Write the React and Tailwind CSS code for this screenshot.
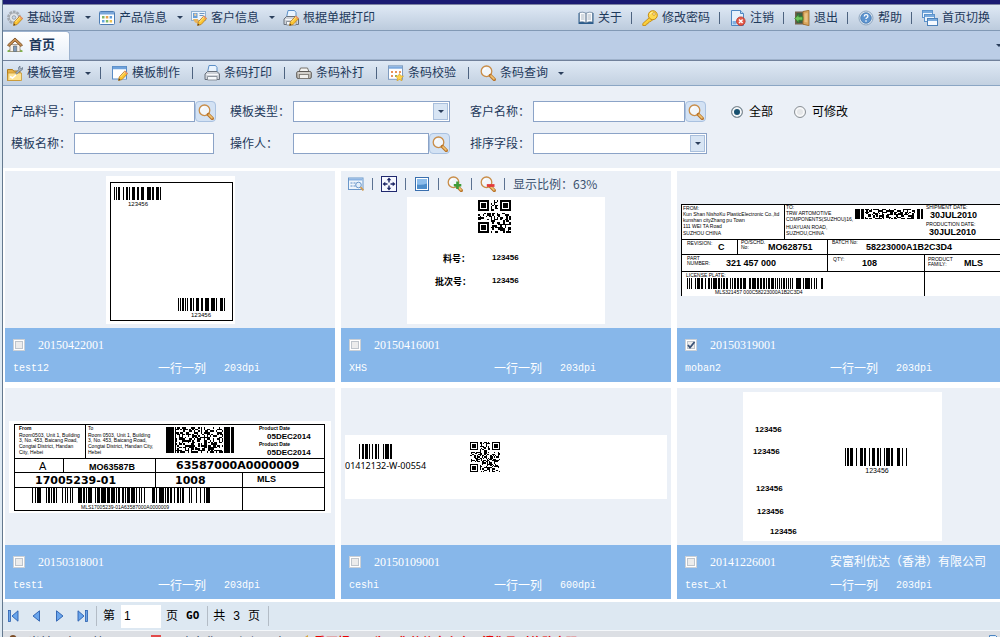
import React, { useState } from 'react';

const TINY = 'Liberation Sans, sans-serif';
const WIDE = 'DejaVu Sans, sans-serif';
const CJK = 'Noto Sans CJK SC, sans-serif';

/* ---------- icons ---------- */

const Icon = ({ children, className = 'w-4 h-4' }) => (
  <svg viewBox="0 0 16 16" className={`${className} shrink-0`} aria-hidden="true">{children}</svg>
);

const Pencil = () => (
  <g>
    <path d="M6.500 15.500l.8-3.600 5.600-6 2.800 2.600-5.600 6z" fill="#fbc531" stroke="#b9791a" strokeWidth=".8" />
    <path d="M12 6.800l2.700 2.600 1-1.100-2.700-2.500z" fill="#e9926f" />
    <path d="M8.500 12l4.500-4.900" stroke="#fff0a8" strokeWidth=".8" />
    <path d="M6.500 15.500l.5-2 1.500 1.400z" fill="#4d3b22" />
  </g>
);

const GearIcon = () => (
  <Icon>
    <circle cx="7" cy="7.500" r="5.600" fill="none" stroke="#a3a9b0" strokeWidth="2.600" strokeDasharray="2.600 .918" />
    <circle cx="7" cy="7.500" r="4.600" fill="#e2e5e8" stroke="#a3a9b0" strokeWidth="1" />
    <circle cx="7" cy="7.500" r="1.800" fill="#c8d8ea" stroke="#8f969e" strokeWidth=".8" />
    <Pencil />
  </Icon>
);

const GridIcon = () => (
  <Icon>
    <rect x=".5" y="1.500" width="15" height="13" rx="1" fill="#fff" stroke="#4c7cb4" />
    <rect x="1" y="2" width="14" height="2.500" fill="#7ba7da" />
    <rect x="3" y="6" width="2.500" height="2.500" fill="#82b56a" />
    <rect x="6.800" y="6" width="2.500" height="2.500" fill="#e7a24b" />
    <rect x="10.600" y="6" width="2.500" height="2.500" fill="#5f9bd8" />
    <rect x="3" y="10" width="2.500" height="2.500" fill="#63a5df" />
    <rect x="6.800" y="10" width="2.500" height="2.500" fill="#7cb868" />
    <rect x="10.600" y="10" width="2.500" height="2.500" fill="#eec04f" />
  </Icon>
);

const CustomerIcon = () => (
  <Icon>
    <rect x=".5" y="1.500" width="14" height="9" fill="#eef5fc" stroke="#8fb0d2" />
    <rect x="2" y="3" width="4.500" height="5" fill="#69a0d8" />
    <circle cx="4.300" cy="4.700" r="1.200" fill="#f3cc9b" />
    <path d="M8.500 3.500h5M8.500 5.500h4" stroke="#6f97c2" />
    <path d="M2 9h5l1 5-4-1.500z" fill="#e8b45d" />
    <Pencil />
  </Icon>
);

const Printer = () => (
  <g>
    <path d="M3.500 7.500l1.500-7h6.500l1.500 2v5z" fill="#eaf4fe" stroke="#5b8fc7" />
    <path d="M1 9l2.500-2.500h9.500L15.500 9v5.500H1z" fill="#cfd3d9" stroke="#69717c" />
    <path d="M3.500 11.500h9.500v3.500H3.500z" fill="#f6f9fc" stroke="#7a828c" strokeWidth=".8" />
    <path d="M2.500 9.500h11.500" stroke="#f7f8fa" />
  </g>
);

const PrintIcon = () => <Icon><Printer /></Icon>;
const PrintEditIcon = () => <Icon><Printer /><Pencil /></Icon>;

const ReprintIcon = () => (
  <Icon>
    <path d="M3 7l1.500-4h7L13 7z" fill="#f4f4f2" stroke="#77736d" />
    <rect x=".7" y="6.500" width="14.600" height="7" rx="1.500" fill="#bdb9b2" stroke="#5e5b57" />
    <path d="M1.500 8h13" stroke="#e8e6e2" />
    <rect x="3.500" y="9.500" width="9" height="4" fill="#f0efec" stroke="#77736d" strokeWidth=".8" />
  </Icon>
);

const BookIcon = () => (
  <Icon>
    <path d="M.5 3h15v11H.5z" fill="#2b5c8c" />
    <path d="M1.500 2.500q3.500-1 6.500.7v9.500q-3-1.500-6.500-.7zM14.500 2.500q-3.500-1-6.500.7v9.500q3-1.500 6.500-.7z" fill="#fbfcfd" stroke="#5c7794" strokeWidth=".7" />
    <path d="M3 5h3.500M3 7h3.500M3 9h3.500M9.500 5H13M9.500 7H13M9.500 9H13" stroke="#9aa7b5" strokeWidth=".8" />
  </Icon>
);

const KeyIcon = () => (
  <Icon>
    <path d="M7.500 7.500L.8 13.500v2h3l.6-1.500 1.600-.3.500-1.500 1.500-.4L10.500 10z" fill="#fbd03c" stroke="#c68b12" strokeWidth=".9" />
    <circle cx="10.800" cy="5.200" r="4.500" fill="#fdd94f" stroke="#c68b12" />
    <circle cx="12" cy="4" r="1.300" fill="#fff8dd" stroke="#c68b12" strokeWidth=".7" />
    <path d="M8 4.500q1-2.300 2.500-2.300" stroke="#fff3b0" fill="none" />
  </Icon>
);

const LogoutIcon = () => (
  <Icon>
    <path d="M1.500.5h9l3 3v12h-12z" fill="#e6f1fc" stroke="#4e86c2" />
    <path d="M10.500.5v3h3" fill="#bcd7f1" stroke="#4e86c2" />
    <path d="M2.500 14.500V11h4v3.500z" fill="#7fb0e2" />
    <circle cx="10.800" cy="11.200" r="4.300" fill="#e55a49" stroke="#b23428" strokeWidth=".8" />
    <path d="M9 9.400l3.600 3.600M12.600 9.400L9 13" stroke="#fff" strokeWidth="1.400" />
  </Icon>
);

const ExitIcon = () => (
  <Icon>
    <path d="M1 1.500h14v13H1z" fill="#74624b" />
    <path d="M2.500 3h6v10h-6z" fill="#3c5f45" />
    <path d="M9 1.500l6-1.200v15.400l-6-1.500z" fill="#d9a55b" stroke="#94672b" strokeWidth=".8" />
    <path d="M10.500 3.500l3-.5v9.500l-3-.5z" fill="#e9c184" />
    <path d="M.8 8.500l4-4v2.300h4v3.400h-4v2.300z" fill="#6fc65c" stroke="#2f7d2b" strokeWidth=".8" />
  </Icon>
);

const HelpIcon = () => (
  <Icon>
    <circle cx="8" cy="8" r="7" fill="#dfe8f2" stroke="#8ea6c0" />
    <circle cx="8" cy="8" r="5.300" fill="#5c93cf" stroke="#3f73ab" strokeWidth=".7" />
    <path d="M6.200 6.500q.1-1.800 1.900-1.800t1.800 1.500q0 .9-1 1.500-.9.500-.9 1.400M8 10.300v1.400" fill="none" stroke="#fff" strokeWidth="1.300" />
  </Icon>
);

const WindowsIcon = () => (
  <Icon>
    <rect x=".5" y=".5" width="10" height="7" fill="#edf5fd" stroke="#5d93cb" />
    <path d="M1 2h9" stroke="#78aadd" strokeWidth="2" />
    <rect x="2.500" y="4.500" width="10" height="7" fill="#edf5fd" stroke="#5d93cb" />
    <path d="M3 6h9" stroke="#78aadd" strokeWidth="2" />
    <rect x="5.500" y="8.500" width="10" height="7" fill="#f6faff" stroke="#4d82ba" />
    <path d="M6 10h9" stroke="#78aadd" strokeWidth="2" />
  </Icon>
);

const HomeIcon = () => (
  <Icon>
    <path d="M.5 13.500q3-2 7.500-2t7.500 2v1.500H.5z" fill="#7fb14a" />
    <path d="M3 7.500h10v7H3z" fill="#f7f1e8" stroke="#9a8b7a" strokeWidth=".8" />
    <path d="M6.500 9h3.200v5.500H6.500z" fill="#7f9bbb" stroke="#5f6b78" strokeWidth=".7" />
    <path d="M.5 8L8 1l7.500 7-1.500 1.500L8 4 2 9.500z" fill="#c99152" stroke="#7c4e22" strokeWidth=".9" />
  </Icon>
);

const FolderToolIcon = () => (
  <Icon>
    <path d="M.5 4.500h5l1.200 1.500H13v9.500H.5z" fill="#e5b047" stroke="#b07c1d" />
    <path d="M1 8h13.500v7.500H.8z" fill="#fde394" stroke="#c79632" strokeWidth=".8" />
    <path d="M3 11.500l2.500 1.500L9 10" fill="none" stroke="#fff" strokeWidth="1.600" />
    <path d="M8.500 8l3.200-3.200Q10.800 2.200 13 1l-.2 1.800 1.400.8L15.700 2.500Q16 5.500 13 6L9.800 9z" fill="#a9b6c6" stroke="#5f7085" strokeWidth=".7" />
  </Icon>
);

const DesignIcon = () => (
  <Icon>
    <rect x=".5" y="1.500" width="14" height="12.500" fill="#fff" stroke="#5a8cc5" />
    <path d="M1 3h13" stroke="#6fa2dc" strokeWidth="2.500" />
    <path d="M14 8v6H8z" fill="#dcebfa" />
    <Pencil />
  </Icon>
);

const VerifyIcon = () => (
  <Icon>
    <rect x=".5" y=".8" width="14" height="13.500" fill="#fff" stroke="#7f9cc0" />
    <path d="M1 2.500h13" stroke="#7fabdf" strokeWidth="2.500" />
    <path d="M3 6h2v2H3zM7 6h2v2H7z" fill="#e8935a" />
    <path d="M11 6h2v2h-2zM3 10h2v2H3z" fill="#e8935a" />
    <path d="M7 10h2v2H7z" fill="#7eb56a" />
    <path d="M11.500 8.500l1.200 2.300 2.800.4-2 1.900.5 2.700-2.500-1.300L9 15.800l.5-2.700-2-1.900 2.800-.4z" fill="#ffd34a" stroke="#d09b1e" strokeWidth=".6" />
  </Icon>
);

const Lens = () => (
  <g>
    <circle cx="6.500" cy="6.300" r="5.300" fill="#f2f6fa" stroke="#c98d48" strokeWidth="1.300" />
    <path d="M3.500 5.500q.6-2 2.700-2.300" fill="none" stroke="#fff" strokeWidth="1.200" />
    <path d="M10.300 10.500l4 4" stroke="#b97429" strokeWidth="3.200" strokeLinecap="round" />
    <path d="M11 10.900l3 3" stroke="#f0c372" strokeWidth="1.500" strokeLinecap="round" />
  </g>
);

const SearchIcon = () => <Icon><Lens /></Icon>;
const ZoomInIcon = () => <Icon><Lens /><path d="M10.500 5.500v7.500M6.800 9.200h7.500" stroke="#3f9c39" strokeWidth="2.600" /></Icon>;
const ZoomOutIcon = () => <Icon><Lens /><path d="M6.800 9.500h7.700" stroke="#e23c3c" strokeWidth="2.800" /></Icon>;

const PreviewIcon = () => (
  <Icon>
    <rect x=".5" y="2" width="14.500" height="11.500" fill="#eef5fc" stroke="#6a97ca" />
    <path d="M1 3.500h13.500" stroke="#8db4e2" strokeWidth="2" />
    <path d="M2.500 7h2M2.500 10h2M5.500 7h2M5.500 10h2" stroke="#5f8fc6" />
    <circle cx="10.500" cy="9" r="2.800" fill="#e3effb" stroke="#6a97ca" />
    <path d="M12.600 11.200l2.800 3.200" stroke="#d09a52" strokeWidth="1.800" />
  </Icon>
);

const MoveIcon = () => (
  <Icon>
    <rect x=".5" y=".5" width="15" height="15" fill="#f6f8ff" stroke="#20286e" />
    <path d="M8 1.500l2.300 2.800H5.700zM8 14.500l2.300-2.800H5.700zM1.500 8l2.800-2.300v4.600zM14.500 8l-2.800-2.300v4.600z" fill="#1b2465" />
    <path d="M8 4v2.500M8 9.500V12M4 8h2.500M9.500 8H12" stroke="#1b2465" strokeWidth="1.400" />
  </Icon>
);

const FitIcon = () => (
  <Icon>
    <rect x="1.500" y="1.500" width="13" height="13" fill="#fff" stroke="#3a6fae" />
    <rect x="3" y="3" width="10" height="10" fill="#4e8ecb" />
    <path d="M3 3h10v4.500q-5 2-10 1z" fill="#8dbdeb" />
  </Icon>
);

const Caret = () => (
  <svg viewBox="0 0 6 3" className="w-1.5 h-[3px] shrink-0" aria-hidden="true"><path d="M0 0h6L3 3z" fill="#2b3f5c" /></svg>
);

const Sep = ({ className = '' }) => <span className={`w-px h-3 shrink-0 bg-[#4d6380] ${className}`} />;

/* ---------- label drawing ---------- */

const Barcode = ({ x, y, w, h, bars }) => {
  const widths = bars.split('').map(Number);
  const unit = w / widths.reduce((a, b) => a + b, 0);
  let pos = 0;
  return (
    <g shapeRendering="crispEdges">
      {widths.map((n, i) => {
        const left = x + pos * unit;
        pos += n;
        return i % 2 === 0 ? <rect key={i} x={left} y={y} width={n * unit} height={h} /> : null;
      })}
    </g>
  );
};

const noise = (cols, rows, seed) => {
  const cells = [];
  for (let r = 0; r < rows; r++) {
    for (let c = 0; c < cols; c++) {
      let v = Math.imul(c + 1, 374761393) ^ Math.imul(r + 1, 668265263) ^ Math.imul(seed, 2246822519);
      v = Math.imul(v ^ (v >>> 13), 1274126177);
      v = Math.imul(v ^ (v >>> 15), 2246822519);
      if ((v ^ (v >>> 16)) & 1) cells.push([c, r]);
    }
  }
  return cells;
};

const Noise = ({ x, y, w, h, cols, rows, seed }) => (
  <path
    transform={`translate(${x} ${y}) scale(${w / cols} ${h / rows})`}
    d={noise(cols, rows, seed).map(([c, r]) => `M${c} ${r}h1v1h-1z`).join('')}
    shapeRendering="crispEdges"
  />
);

const QrCode = ({ x, y, size, n, seed }) => {
  const inFinder = (c, r) => (c < 8 && r < 8) || (c >= n - 8 && r < 8) || (c < 8 && r >= n - 8);
  const cells = noise(n, n, seed).filter(([c, r]) => !inFinder(c, r));
  return (
    <g transform={`translate(${x} ${y}) scale(${size / n})`} shapeRendering="crispEdges">
      <path d={cells.map(([c, r]) => `M${c} ${r}h1v1h-1z`).join('')} />
      {[[0, 0], [n - 7, 0], [0, n - 7]].map(([c, r]) => (
        <g key={`${c}-${r}`}>
          <rect x={c} y={r} width="7" height="7" />
          <rect x={c + 1} y={r + 1} width="5" height="5" fill="#fff" />
          <rect x={c + 2} y={r + 2} width="3" height="3" />
        </g>
      ))}
    </g>
  );
};

const T = ({ x, y, s = 5, b, f = TINY, a, children }) => (
  <text x={x} y={y} fontSize={s} fontWeight={b ? 700 : 400} fontFamily={f} textAnchor={a}>{children}</text>
);

const Label = ({ w, h, children }) => (
  <svg width={w} height={h} viewBox={`0 0 ${w} ${h}`} className="bg-white shrink-0">{children}</svg>
);

const LabelTest12 = () => (
  <Label w={129} h={148}>
    <rect x="4.500" y="6.500" width="122" height="138" fill="none" stroke="#000" />
    <Barcode x={8} y={11} w={47} h={13} bars="1111231221123222334122311" />
    <T x={32} y={30} s={6} a="middle">123456</T>
    <Barcode x={72} y={122} w={47} h={13} bars="111121111221123222424113311" />
    <T x={95} y={141} s={6} a="middle">123456</T>
  </Label>
);

const LabelXhs = () => (
  <Label w={198} h={127}>
    <QrCode x={71} y={3} size={33} n={21} seed={77} />
    <T x={36} y={65} s={9} b f={CJK}>料号：</T>
    <T x={85} y={63} s={8} b>123456</T>
    <T x={28} y={88} s={9} b f={CJK}>批次号：</T>
    <T x={85} y={86} s={8} b>123456</T>
  </Label>
);

const LabelMoban2 = () => (
  <Label w={322} h={92}>
    <path d="M.5 92V.5H322M0 35.500h322M0 50.500h322M0 67.500h322M103.500 0v35M56.500 35v15M146.500 35v32M243.500 50v42" fill="none" stroke="#000" shapeRendering="crispEdges" />
    <T x={2} y={6}>FROM:</T>
    <T x={2} y={12}>Kun Shan NishoKu PlasticElectronic Co.,ltd</T>
    <T x={2} y={18}>kunshan cityZhang pu Town</T>
    <T x={2} y={24}>111 WEI TA Road</T>
    <T x={2} y={31}>SUZHOU CHINA</T>
    <T x={105} y={5}>TO:</T>
    <T x={105} y={11}>TRW ARTOMOTIVE</T>
    <T x={105} y={17}>COMPONENTS(SUZHOU)16,</T>
    <T x={105} y={25}>HUAYUAN ROAD,</T>
    <T x={105} y={31}>SUZHOU,CHINA</T>
    <Barcode x={174} y={5} w={9} h={10} bars="412" />
    <Noise x={184} y={5} w={50} h={10} cols={36} rows={8} seed={31} />
    <Barcode x={236} y={5} w={7} h={10} bars="3121" />
    <T x={245} y={5}>SHIPMENT DATE:</T>
    <T x={249} y={14} s={9} b>30JUL2010</T>
    <T x={245} y={22}>PRODUCTION DATE:</T>
    <T x={248} y={31} s={9} b>30JUL2010</T>
    <T x={6} y={41}>REVISION:</T>
    <T x={37} y={46} s={9} b>C</T>
    <T x={60} y={40}>PO/SCHD.</T>
    <T x={60} y={45}>No:</T>
    <T x={87} y={46} s={9} b>MO628751</T>
    <T x={151} y={40}>BATCH No:</T>
    <T x={185} y={46} s={9} b>58223000A1B2C3D4</T>
    <T x={6} y={56}>PART</T>
    <T x={6} y={61}>NUMBER:</T>
    <T x={45} y={62} s={9} b>321 457 000</T>
    <T x={152} y={57}>QTY:</T>
    <T x={181} y={62} s={9} b>108</T>
    <T x={247} y={57}>PRODUCT</T>
    <T x={247} y={62}>FAMILY:</T>
    <T x={283} y={62} s={9} b>MLS</T>
    <T x={5} y={73}>LICENSE PLATE:</T>
    <Barcode x={6} y={74} w={137} h={11} bars="1111121131211221113121112112111121112133114121112111212111111111111111111252114112111321" />
    <T x={34} y={90}>MLS321457 000C58223000A1B2C3D4</T>
  </Label>
);

const LabelTest1 = () => (
  <Label w={322} h={92}>
    <path d="M5.500 3.500h310v86H5.500zM5 37.500h310M5 51.500h310M5 66.500h310M76.500 3v34M54.500 37v14M146.500 37v29M233.500 51v38" fill="none" stroke="#000" shapeRendering="crispEdges" />
    <T x={10} y={9} b>From</T>
    <T x={10} y={16}>Room0503, Unit 1, Building</T>
    <T x={10} y={21}>3, No. 453, Baicang Road,</T>
    <T x={10} y={27}>Congtai District, Handan</T>
    <T x={10} y={33}>City, Hebei</T>
    <T x={79} y={9}>To</T>
    <T x={79} y={16}>Room 0503, Unit 1, Building</T>
    <T x={79} y={21}>3, No. 453, Baicang Road,</T>
    <T x={79} y={27}>Congtai District, Handan City,</T>
    <T x={79} y={33}>Hebei</T>
    <Barcode x={157} y={6} w={10} h={26} bars="611" />
    <Noise x={167} y={6} w={47} h={26} cols={32} rows={16} seed={9} />
    <Barcode x={215} y={6} w={11} h={26} bars="5131" />
    <T x={250} y={9} b>Product Date</T>
    <T x={258} y={18} s={8} b>05DEC2014</T>
    <T x={250} y={25} b>Product Date</T>
    <T x={258} y={34} s={8} b>05DEC2014</T>
    <T x={30} y={49} s={11}>A</T>
    <T x={80} y={49} s={9} b>MO63587B</T>
    <T x={167} y={48} s={11} b f={WIDE}>63587000A0000009</T>
    <T x={26} y={63} s={11} b f={WIDE}>17005239-01</T>
    <T x={166} y={63} s={11} b f={WIDE}>1008</T>
    <T x={248} y={61} s={9} b>MLS</T>
    <Barcode x={23} y={67} w={178} h={15} bars="11113411111111141111111114311111321121412131111211112131111111162111411111211211111411131212113" />
    <T x={72} y={88}>MLS17005239-01A63587000A0000009</T>
  </Label>
);

const LabelCeshi = () => (
  <Label w={322} h={64}>
    <Barcode x={14} y={9} w={33} h={15} bars="1211311112211311312" />
    <T x={0} y={34} s={9} f="Noto Sans, sans-serif">01412132-W-00554</T>
    <QrCode x={125} y={7} size={30} n={25} seed={1234} />
  </Label>
);

const LabelTestXl = () => (
  <Label w={199} h={149}>
    {[[12, 40], [10, 62], [13, 99], [14, 122], [27, 142]].map(([x, y]) => <T key={y} x={x} y={y} s={8} b>123456</T>)}
    <Barcode x={102} y={56} w={63} h={18} bars="11113212311311312112113123221211" />
    <T x={134} y={81} s={7} a="middle">123456</T>
  </Label>
);

/* ---------- data ---------- */

const MENU = [
  { text: '基础设置', icon: GearIcon, caret: true },
  { text: '产品信息', icon: GridIcon, caret: true },
  { text: '客户信息', icon: CustomerIcon, caret: true },
  { text: '根据单据打印', icon: PrintEditIcon },
];

const LINKS = [
  { text: '关于', icon: BookIcon },
  { text: '修改密码', icon: KeyIcon },
  { text: '注销', icon: LogoutIcon },
  { text: '退出', icon: ExitIcon },
  { text: '帮助', icon: HelpIcon },
  { text: '首页切换', icon: WindowsIcon },
];

const TOOLS = [
  { text: '模板管理', icon: FolderToolIcon, caret: true },
  { text: '模板制作', icon: DesignIcon },
  { text: '条码打印', icon: PrintIcon },
  { text: '条码补打', icon: ReprintIcon },
  { text: '条码校验', icon: VerifyIcon },
  { text: '条码查询', icon: SearchIcon, caret: true },
];

const TEMPLATES = [
  { code: '20150422001', name: 'test12', dpi: '203dpi', label: LabelTest12 },
  { code: '20150416001', name: 'XHS', dpi: '203dpi', label: LabelXhs, tools: true },
  { code: '20150319001', name: 'moban2', dpi: '203dpi', label: LabelMoban2, checked: true },
  { code: '20150318001', name: 'test1', dpi: '203dpi', label: LabelTest1 },
  { code: '20150109001', name: 'ceshi', dpi: '600dpi', label: LabelCeshi },
  { code: '20141226001', name: 'test_xl', dpi: '203dpi', label: LabelTestXl, company: '安富利优达（香港）有限公司' },
];

/* ---------- page parts ---------- */

const SearchField = ({ id, label, className }) => (
  <div className="flex items-center">
    <label htmlFor={id} className="w-[63px] shrink-0">{label}</label>
    <input id={id} type="text" className={`h-[21px] border border-[#8ba3c7] bg-white px-1 outline-none ${className}`} />
    <button type="button" aria-label="查询" className="w-[21px] h-[21px] flex items-center justify-center rounded-sm border border-[#a9c1e0] bg-[#d3e2f4]">
      <SearchIcon />
    </button>
  </div>
);

const SelectField = ({ id, label, className }) => (
  <div className="flex items-center">
    <label htmlFor={id} className="w-[63px] shrink-0">{label}</label>
    <div className={`relative h-[21px] ${className}`}>
      <select id={id} className="appearance-none w-full h-full border border-[#8ba3c7] bg-white px-1 outline-none">
        <option value=""></option>
      </select>
      <span className="pointer-events-none absolute right-0.5 top-0.5 w-[15px] h-[17px] flex items-center justify-center border border-[#a9bfdc] bg-[#d8e5f4]">
        <Caret />
      </span>
    </div>
  </div>
);

const Radio = ({ label, value, mode, setMode }) => (
  <label className="flex items-center gap-1.5 text-black">
    <input type="radio" name="mode" checked={mode === value} onChange={() => setMode(value)}
      className="appearance-none w-3 h-3 rounded-full border border-[#8a9096] bg-[#e4e6e8] shadow-[inset_0_0_0_2px_#f6f7f8] checked:bg-[#17506f]" />
    {label}
  </label>
);

const CardTools = () => (
  <div className="self-start w-full h-[26px] pl-[7px] flex items-center text-[#3a506e]">
    {[['预览', PreviewIcon], ['移动', MoveIcon], ['适应', FitIcon], ['放大', ZoomInIcon], ['缩小', ZoomOutIcon]].map(([name, Ico]) => (
      <React.Fragment key={name}>
        <button type="button" aria-label={name}><Ico /></button>
        <Sep className="mx-2 bg-[#5b7191]" />
      </React.Fragment>
    ))}
    <span className="font-['Noto_Sans_CJK_SC',sans-serif]">显示比例：63%</span>
  </div>
);

const TemplateCard = ({ item }) => {
  const [checked, setChecked] = useState(!!item.checked);
  const Preview = item.label;
  return (
    <div className="bg-[#ebf0f7]">
      <div className="h-[157px] flex flex-col items-center justify-center">
        {item.tools && <CardTools />}
        <Preview />
        {item.tools && <div className="h-1" />}
      </div>
      <div className="h-[54px] pt-[5px] pl-2 bg-[#87b7ea] text-white">
        <div className="h-6 flex items-center">
          <label className="w-[145px] flex items-center gap-[13px]">
            <span className="relative w-3 h-3">
              <input type="checkbox" checked={checked} onChange={() => setChecked(!checked)}
                className="appearance-none block w-3 h-3 border border-[#cbd0d6] bg-[#ececec] shadow-[inset_0_0_0_1px_#fff,inset_0_0_0_2px_#bfc5cc]" />
              {checked && (
                <svg viewBox="0 0 12 12" className="pointer-events-none absolute inset-0 w-3 h-3"><path d="M3 6l2 2.500L9.500 3" fill="none" stroke="#3a5276" strokeWidth="1.800" /></svg>
              )}
            </span>
            <span className="font-['Liberation_Serif',serif]">{item.code}</span>
          </label>
          <span>{item.company}</span>
        </div>
        <div className="h-6 flex items-center">
          <span className="w-[145px] text-[10px] font-['Liberation_Mono',monospace]">{item.name}</span>
          <span className="w-[66px]">一行一列</span>
          <span className="text-[10px] font-['Liberation_Mono',monospace]">{item.dpi}</span>
        </div>
      </div>
    </div>
  );
};

const PageButton = ({ name, d, bar }) => (
  <button type="button" aria-label={name} className="w-[11px] h-3">
    <svg viewBox="0 0 11 12" className="w-[11px] h-3">
      {bar !== undefined && <rect x={bar} y=".5" width="2" height="11" fill="#6ea6e8" stroke="#2a5fae" strokeWidth=".8" />}
      <path d={d} fill="#69a5ec" stroke="#2a5fae" strokeWidth=".9" />
    </svg>
  </button>
);

const Pager = () => (
  <div className="h-[29px] shrink-0 flex items-center pl-[5px] bg-[#dde8f2] text-black border-b border-[#f4f7fa]">
    <div className="flex items-center gap-3">
      <PageButton name="首页" bar={0.5} d="M10 .8v10.400L4 6z" />
      <PageButton name="上一页" d="M8.500.8v10.400L2 6z" />
      <PageButton name="下一页" d="M2.500.8v10.400L9 6z" />
      <PageButton name="末页" bar={8.5} d="M1 .8v10.400L7 6z" />
    </div>
    <span className="w-px h-5 ml-2 mr-1.5 bg-[#b3bcc6]" />
    <label className="flex items-center gap-1.5">
      第
      <input type="text" defaultValue="1" className="w-10 h-[23px] bg-white px-[3px] outline-none" />
    </label>
    <span className="ml-[5px]">页</span>
    <button type="button" className="ml-2 text-[11px] font-bold font-['DejaVu_Sans_Mono',monospace]">GO</button>
    <span className="w-px h-5 ml-2 mr-[5px] bg-[#b3bcc6]" />
    <span className="flex gap-2"><span>共</span><span>3</span><span>页</span></span>
    <span className="w-px h-5 ml-2 bg-[#b3bcc6]" />
  </div>
);

const StatusBar = () => (
  <div className="h-6 shrink-0 flex items-start justify-between bg-[#dcdfe4] pl-[5px] pt-1 leading-4">
    <div className="flex items-start">
      <Icon><circle cx="5" cy="3.500" r="3.500" fill="#7a4a24" /><path d="M0 14q0-7 5-7t5 7z" fill="#5b8fc7" /></Icon>
      <span className="ml-1 w-[65px]">当前用户</span>
      <span className="w-[58px]">管理员</span>
      <Icon><rect width="10" height="12" fill="#e24a4a" /></Icon>
      <span className="ml-0.5 w-[69px]">用户名称</span>
      <span className="w-[60px]">根据用户</span>
      <Icon><path d="M1 6l9-6v12z" fill="#d9a53a" /></Icon>
      <span className="font-bold text-[#e80000]">重要提示：为了您的信息安全，请您及时修改密码</span>
    </div>
    <Icon><path d="M5.500.5h6l3 3v12h-9z" fill="#e6f1fc" stroke="#4e86c2" /></Icon>
  </div>
);

const App = () => {
  const [mode, setMode] = useState('all');

  return (
    <div className="h-screen overflow-hidden pl-0.5 bg-[#dfeaf3] text-xs leading-4 text-[#1e395b] font-['Liberation_Sans','Noto_Sans_CJK_SC',sans-serif]">
      <div className="h-full flex flex-col overflow-hidden border-l border-[#64798f] bg-white">
        <div className="h-[5px] shrink-0 bg-[#1b1c74] border-b border-[#7d84a4]" />

        <header className="h-[26px] shrink-0 flex items-center justify-between pl-1 pr-2.5 bg-gradient-to-b from-[#dfe9f5] to-[#bccbdd] border-b border-[#8299b5]">
          <nav className="flex items-center">
            {MENU.map(({ text, icon: Ico, caret }) => (
              <button key={text} type="button" className="flex items-center gap-1 mr-2">
                <Ico />
                {text}
                {caret && <span className="w-3 flex justify-end"><Caret /></span>}
              </button>
            ))}
          </nav>
          <nav className="flex items-center">
            {LINKS.map(({ text, icon: Ico }, i) => (
              <React.Fragment key={text}>
                {i > 0 && <Sep className="ml-[9px] mr-2.5" />}
                <a href="#" className="flex items-center gap-1"><Ico />{text}</a>
              </React.Fragment>
            ))}
          </nav>
        </header>

        <div className="h-[30px] shrink-0 flex items-end justify-between bg-[#bbcde6] border-b border-[#71819b]">
          <button type="button" className="h-[29px] w-[67px] flex items-center gap-1.5 pl-1 pb-0.5 rounded-tr-sm border-r border-t border-[#9db3cf] bg-gradient-to-b from-white to-[#e6eef8] text-[13px] font-bold">
            <HomeIcon />首页
          </button>
          <div className="flex-1 h-full flex items-center justify-end border-b border-[#9fb2cb] overflow-hidden">
            <span className="w-1 overflow-hidden"><Caret /></span>
          </div>
        </div>

        <div className="h-[25px] shrink-0 flex items-center pl-1 bg-gradient-to-b from-[#dfe9f5] to-[#c3d1e1] border-b border-[#8ba6c4]">
          {TOOLS.map(({ text, icon: Ico, caret }, i) => (
            <React.Fragment key={text}>
              {i > 0 && <Sep className={i > 1 ? 'ml-3 mr-[11px]' : 'ml-[9px] mr-[11px]'} />}
              <button type="button" className="flex items-center gap-1">
                <Ico />
                {text}
                {caret && <span className="w-3 flex justify-end"><Caret /></span>}
              </button>
            </React.Fragment>
          ))}
        </div>

        <form className="h-[82px] shrink-0 pt-[15px] pl-2 grid grid-cols-[219px_240px_261px_auto] gap-y-[11px] content-start bg-[#ebf0f7]">
          <SearchField id="material" label="产品料号：" className="w-[121px]" />
          <SelectField id="type" label="模板类型：" className="w-[157px]" />
          <SearchField id="customer" label="客户名称：" className="w-[152px]" />
          <div className="flex items-center gap-[21px]">
            <Radio label="全部" value="all" mode={mode} setMode={setMode} />
            <Radio label="可修改" value="editable" mode={mode} setMode={setMode} />
          </div>
          <div className="flex items-center">
            <label htmlFor="name" className="w-[63px] shrink-0">模板名称：</label>
            <input id="name" type="text" className="w-[140px] h-[21px] border border-[#8ba3c7] bg-white px-1 outline-none" />
          </div>
          <SearchField id="operator" label="操作人：" className="w-[136px]" />
          <SelectField id="sort" label="排序字段：" className="w-[174px]" />
        </form>

        <main className="shrink-0 pt-[3px] pl-0.5 pb-[3px] grid grid-cols-[330px_330px_330px] gap-1.5 overflow-hidden">
          {TEMPLATES.map(item => <TemplateCard key={item.code} item={item} />)}
        </main>

        <Pager />
        <StatusBar />
      </div>
    </div>
  );
};

export default App;
